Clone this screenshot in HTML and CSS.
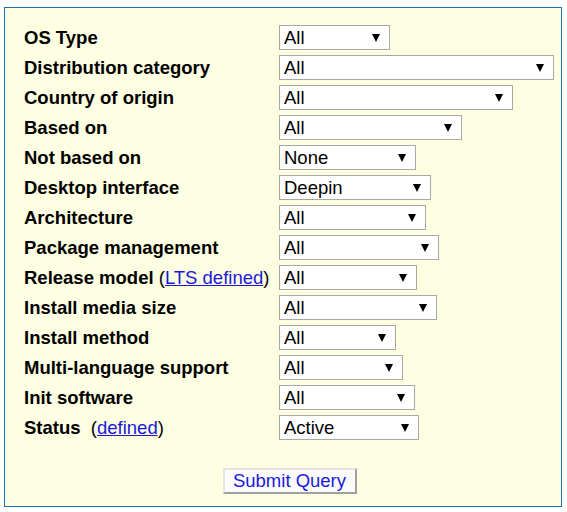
FILE: index.html
```html
<!DOCTYPE html>
<html lang="en">
<head>
    <meta charset="UTF-8" />
    <title>Distribution search</title>
    <link rel="stylesheet" href="styles.css">
</head>
<body>
    <div class="search-box">
        <form class="search-form">
            <div class="filters">
                <label class="filter-label">OS Type</label>
                <span class="select w-ostype"><select><option>All</option></select></span>

                <label class="filter-label">Distribution category</label>
                <span class="select w-category"><select><option>All</option></select></span>

                <label class="filter-label">Country of origin</label>
                <span class="select w-country"><select><option>All</option></select></span>

                <label class="filter-label">Based on</label>
                <span class="select w-basedon"><select><option>All</option></select></span>

                <label class="filter-label">Not based on</label>
                <span class="select w-notbased"><select><option>None</option></select></span>

                <label class="filter-label">Desktop interface</label>
                <span class="select w-desktop"><select><option>Deepin</option></select></span>

                <label class="filter-label">Architecture</label>
                <span class="select w-arch"><select><option>All</option></select></span>

                <label class="filter-label">Package management</label>
                <span class="select w-package"><select><option>All</option></select></span>

                <label class="filter-label">Release model <span class="note">(<a href="#">LTS defined</a>)</span></label>
                <span class="select w-release"><select><option>All</option></select></span>

                <label class="filter-label">Install media size</label>
                <span class="select w-media"><select><option>All</option></select></span>

                <label class="filter-label">Install method</label>
                <span class="select w-method"><select><option>All</option></select></span>

                <label class="filter-label">Multi-language support</label>
                <span class="select w-lang"><select><option>All</option></select></span>

                <label class="filter-label">Init software</label>
                <span class="select w-init"><select><option>All</option></select></span>

                <label class="filter-label">Status&nbsp; <span class="note">(<a href="#">defined</a>)</span></label>
                <span class="select w-status"><select><option>Active</option></select></span>
            </div>

            <div class="submit-row">
                <button type="submit" class="btn-submit">Submit Query</button>
            </div>
        </form>
    </div>
</body>
</html>
```

FILE: styles.css
```css
* {
    box-sizing: border-box;
}

body {
    margin: 7px 0 0 4px;
    background: #ffffff;
    font-family: "Liberation Sans", Arial, sans-serif;
}

.search-box {
    width: 558px;
    height: 500px;
    border: 1px solid #1e70b4;
    background-color: #fdfee2;
    padding: 17px 0 0 19px;
}

.search-form {
    width: 529px;
}

.filters {
    display: grid;
    grid-template-columns: 255px auto;
    grid-auto-rows: 25px;
    row-gap: 5px;
    justify-items: start;
}

.filter-label {
    font-size: 18.5px;
    font-weight: bold;
    line-height: 26px;
    color: #000;
    white-space: nowrap;
}

.note {
    font-weight: normal;
}

.note a {
    color: #1a1ad6;
    text-decoration: underline;
}

.select {
    position: relative;
    display: block;
    height: 25px;
}

.select select {
    appearance: none;
    -webkit-appearance: none;
    width: 100%;
    height: 25px;
    margin: 0;
    padding: 0 0 0 4px;
    border: 1px solid #a8a8a8;
    border-radius: 0;
    background: #ffffff;
    font-family: "Liberation Sans", Arial, sans-serif;
    font-size: 18.5px;
    color: #000;
}

/* the little black arrow */
.select::after {
    content: "";
    position: absolute;
    right: 10px;
    top: 9px;
    border-left: 4.5px solid transparent;
    border-right: 4.5px solid transparent;
    border-top: 8px solid #000;
    pointer-events: none;
}

.w-ostype { width: 111px; }
.w-category { width: 275px; }
.w-country { width: 234px; }
.w-basedon { width: 183px; }
.w-notbased { width: 137px; }
.w-desktop { width: 152px; }
.w-arch { width: 147px; }
.w-package { width: 160px; }
.w-release { width: 138px; }
.w-media { width: 158px; }
.w-method { width: 117px; }
.w-lang { width: 124px; }
.w-init { width: 136px; }
.w-status { width: 140px; }

.submit-row {
    margin-top: 28px;
    padding-left: 2px;
    text-align: center;
}

.btn-submit {
    width: 134px;
    height: 26px;
    padding: 0;
    background-color: #fbfbfb;
    border: 2px solid;
    border-color: #e4e4e4 #a0a0a0 #a0a0a0 #e4e4e4;
    font-family: "Liberation Sans", Arial, sans-serif;
    font-size: 18.5px;
    color: #1a1ad6;
    cursor: pointer;
}
```
